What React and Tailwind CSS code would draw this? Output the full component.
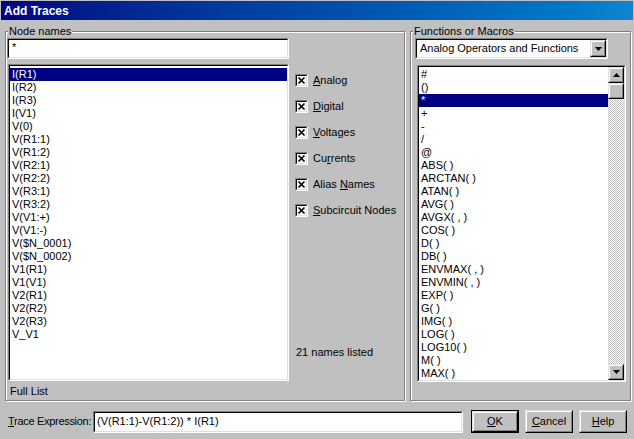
import React from "react";

const nodes = [
  "I(R1)", "I(R2)", "I(R3)", "I(V1)", "V(0)", "V(R1:1)", "V(R1:2)", "V(R2:1)",
  "V(R2:2)", "V(R3:1)", "V(R3:2)", "V(V1:+)", "V(V1:-)", "V($N_0001)", "V($N_0002)",
  "V1(R1)", "V1(V1)", "V2(R1)", "V2(R2)", "V2(R3)", "V_V1",
];

const funcs = [
  "#", "()", "*", "+", "-", "/", "@", "ABS( )", "ARCTAN( )", "ATAN( )", "AVG( )",
  "AVGX( , )", "COS( )", "D( )", "DB( )", "ENVMAX( , )", "ENVMIN( , )", "EXP( )",
  "G( )", "IMG( )", "LOG( )", "LOG10( )", "M( )", "MAX( )",
];

const Sunken = ({ className = "", inner = "", children }) => (
  <div className={`border border-t-[#808080] border-l-[#808080] border-b-white border-r-white ${className}`}>
    <div className={`h-full w-full border border-t-black border-l-black border-b-[#dfdfdf] border-r-[#dfdfdf] bg-white ${inner}`}>
      {children}
    </div>
  </div>
);

const Raised = ({ className = "", children }) => (
  <div className={`border border-t-[#dfdfdf] border-l-[#dfdfdf] border-b-black border-r-black ${className}`}>
    <div className="h-full w-full border border-t-white border-l-white border-b-[#808080] border-r-[#808080] bg-[#c0c0c0] flex items-center justify-center">
      {children}
    </div>
  </div>
);

const Arrow = ({ up }) => (
  <svg width="7" height="4" viewBox="0 0 7 4">
    {up ? <polygon points="3.5,0 7,4 0,4" fill="#000" /> : <polygon points="0,0 7,0 3.5,4" fill="#000" />}
  </svg>
);

const CheckBox = ({ children }) => (
  <div className="flex items-center h-[13px]">
    <Sunken className="w-[13px] h-[13px]" inner="flex items-center justify-center">
      <svg width="9" height="9" viewBox="0 0 9 9">
        <path d="M1.5 1.5 L7.5 7.5 M7.5 1.5 L1.5 7.5" stroke="#000" strokeWidth="1.7" />
      </svg>
    </Sunken>
    <span className="ml-[5px] leading-[13px] whitespace-nowrap">{children}</span>
  </div>
);

const groupCls =
  "border border-[#808080] shadow-[inset_1px_1px_0_#fff,1px_1px_0_#fff] h-[376px]";
const legendCls = "ml-[2px] px-[1px] leading-[13px] bg-[#c0c0c0]";

export default function App() {
  return (
    <div className="w-[634px] h-[439px] bg-[#c0c0c0] flex flex-col overflow-hidden text-[11px] text-black font-['Liberation_Sans',Arial,sans-serif]">
      <div className="h-[19px] mx-px mt-px flex items-center pl-[3px] bg-linear-to-r from-[#000080] to-[#1084d0] text-white font-bold text-[12px]">
        Add Traces
      </div>

      <div className="flex pt-[5px] pl-[5px] gap-[5px]">
        <fieldset className={`${groupCls} w-[400px]`}>
          <legend className={legendCls}>Node names</legend>
          <div className="flex pl-px">
            <div className="w-[282px] flex flex-col">
              <Sunken className="h-[21px]" inner="pl-[3px] leading-[14px]">
                *
              </Sunken>
              <Sunken className="h-[317px] mt-[5px] ml-px w-[281px]" inner="pt-[2px]">
                {nodes.map((n, i) => (
                  <div
                    key={n}
                    className={`h-[13px] leading-[13px] pl-[2px] ${i === 0 ? "bg-[#000080] text-white" : ""}`}
                  >
                    {n}
                  </div>
                ))}
              </Sunken>
              <div className="pl-[3px] mt-[4px] leading-[13px]">Full List</div>
            </div>
            <div className="ml-[6px] pt-[36px] flex flex-col">
              <div className="flex flex-col gap-[13px]">
                <CheckBox><u>A</u>nalog</CheckBox>
                <CheckBox><u>D</u>igital</CheckBox>
                <CheckBox><u>V</u>oltages</CheckBox>
                <CheckBox>Cu<u>r</u>rents</CheckBox>
                <CheckBox>Alias <u>N</u>ames</CheckBox>
                <CheckBox><u>S</u>ubcircuit Nodes</CheckBox>
              </div>
              <div className="mt-[129px] ml-px leading-[13px]">21 names listed</div>
            </div>
          </div>
        </fieldset>

        <fieldset className={`${groupCls} w-[221px]`}>
          <legend className={legendCls}>Functions or Macros</legend>
          <div className="flex flex-col pl-[4px]">
            <Sunken className="w-[193px] h-[21px]" inner="flex items-center">
              <span className="flex-1 pl-[3px] whitespace-nowrap">Analog Operators and Functions</span>
              <Raised className="w-[16px] h-[17px]">
                <Arrow />
              </Raised>
            </Sunken>
            <Sunken className="w-[209px] h-[317px] mt-[6px] ml-[2px]" inner="flex">
              <div className="flex-1 pt-px">
                {funcs.map((f, i) => (
                  <div
                    key={f}
                    className={`h-[13px] leading-[13px] pl-[2px] ${i === 2 ? "bg-[#000080] text-white" : ""}`}
                  >
                    {f}
                  </div>
                ))}
              </div>
              <div className="w-[16px] flex flex-col">
                <Raised className="h-[16px]">
                  <Arrow up />
                </Raised>
                <Raised className="h-[16px]" />
                <div className="flex-1 bg-[repeating-conic-gradient(#c0c0c0_0%_25%,#ffffff_0%_50%)] bg-[length:2px_2px]" />
                <Raised className="h-[16px]">
                  <Arrow />
                </Raised>
              </div>
            </Sunken>
          </div>
        </fieldset>
      </div>

      <div className="flex items-center pl-[8px] mt-[9px]">
        <span className="w-[85px] whitespace-nowrap tracking-[-0.3px]">
          <u>T</u>race Expression:
        </span>
        <Sunken className="w-[370px] h-[22px]" inner="pl-[2px] flex items-center">
          (V(R1:1)-V(R1:2)) * I(R1)
        </Sunken>
        <div className="ml-[8px] border border-black w-[48px] h-[23px]">
          <Raised className="h-full">
            <span><u>O</u>K</span>
          </Raised>
        </div>
        <Raised className="ml-[6px] w-[48px] h-[23px]">
          <span><u>C</u>ancel</span>
        </Raised>
        <Raised className="ml-[6px] w-[48px] h-[23px]">
          <span><u>H</u>elp</span>
        </Raised>
      </div>
    </div>
  );
}
